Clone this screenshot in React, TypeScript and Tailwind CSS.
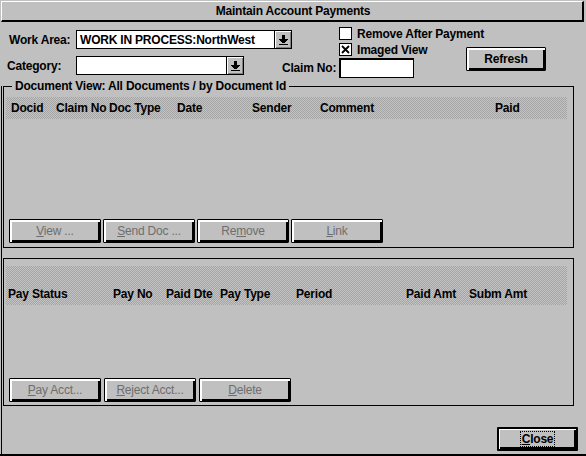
import React from "react";

const dither =
  "bg-[repeating-conic-gradient(#a4a4a4_0%_25%,#c4c4c4_0%_50%)] bg-[length:2px_2px]";

function DropArrow() {
  return (
    <svg width="9" height="10" viewBox="0 0 9 10" shapeRendering="crispEdges">
      <rect x="3" y="0" width="3" height="4" fill="#000" />
      <rect x="0" y="4" width="9" height="1" fill="#000" />
      <rect x="1" y="5" width="7" height="1" fill="#000" />
      <rect x="2" y="6" width="5" height="1" fill="#000" />
      <rect x="3" y="7" width="3" height="1" fill="#000" />
      <rect x="0" y="9" width="9" height="1" fill="#000" />
    </svg>
  );
}

function Dropdown({ width, value }: { width: string; value?: string }) {
  return (
    <div className={`${width} h-[19px] shrink-0 flex border border-black bg-white`}>
      <div className="flex-1 min-w-0 flex items-center pl-[3px] overflow-hidden whitespace-nowrap">{value}</div>
      <div className="w-[17px] shrink-0 h-full border-l border-black bg-[#c0c0c0] flex items-center justify-center shadow-[inset_1px_1px_0_#fff,inset_-1px_-1px_0_#808080]">
        <DropArrow />
      </div>
    </div>
  );
}

function Checkbox({ checked }: { checked?: boolean }) {
  return (
    <div className="w-[13px] h-[13px] shrink-0 border border-black bg-white flex items-center justify-center">
      {checked && (
        <svg width="9" height="9" viewBox="0 0 9 9">
          <path d="M1 1L8 8M8 1L1 8" stroke="#000" strokeWidth="1.8" />
        </svg>
      )}
    </div>
  );
}

function Btn({
  children,
  w,
  disabled,
}: {
  children: React.ReactNode;
  w: string;
  disabled?: boolean;
}) {
  return (
    <div
      className={`${w} h-[24px] shrink-0 border border-black rounded-[1px] flex items-center justify-center whitespace-nowrap shadow-[inset_1px_1px_0_#fff,inset_2px_2px_0_#fff,inset_-2px_-2px_0_#000] ${
        disabled ? "text-[#6e6e6e] font-normal" : "text-black"
      }`}
    >
      {children}
    </div>
  );
}

export default function App() {
  return (
    <div className="w-[586px] h-[456px] bg-[#c0c0c0] font-['Liberation_Sans',Arial,sans-serif] font-bold text-[12px] leading-[14px] tracking-[-0.2px] text-black flex flex-col border-b-2 border-black overflow-hidden">
      {/* title bar */}
      <div className="ml-[1px] mt-[1px] w-[583px] h-[21px] shrink-0 border-t border-l border-white border-r-[2px] border-b-[2px] border-r-black border-b-black flex items-center justify-center">
        <span className="ml-[2px]">Maintain Account Payments</span>
      </div>

      {/* top controls */}
      <div className="flex h-[64px] shrink-0">
        <div className="w-[282px] pl-[7px] pt-[8px] shrink-0">
          <div className="flex items-center h-[19px]">
            <div className="w-[69px] shrink-0 pl-[2px] whitespace-nowrap">Work Area:</div>
            <Dropdown width="w-[216px]" value="WORK IN PROCESS:NorthWest" />
          </div>
          <div className="flex items-center h-[19px] mt-[7px]">
            <div className="w-[69px] shrink-0 whitespace-nowrap">Category:</div>
            <Dropdown width="w-[168px]" />
          </div>
        </div>
        <div className="w-[184px] pt-[5px] shrink-0">
          <div className="flex items-center h-[13px] pl-[57px]">
            <Checkbox />
            <span className="ml-[5px] whitespace-nowrap">Remove After Payment</span>
          </div>
          <div className="flex items-center h-[13px] pl-[57px] mt-[3px]">
            <Checkbox checked />
            <span className="ml-[5px] whitespace-nowrap">Imaged View</span>
          </div>
          <div className="flex items-center mt-[2px]">
            <div className="w-[57px] shrink-0 whitespace-nowrap">Claim No:</div>
            <div className="w-[75px] h-[20px] shrink-0 border border-black bg-white shadow-[inset_1px_1px_0_#000]" />
          </div>
        </div>
        <div className="pt-[25px] shrink-0">
          <Btn w="w-[80px]">Refresh</Btn>
        </div>
      </div>

      {/* lower body */}
      <div className="flex-1 ml-[1px] border-l border-black flex flex-col">
        {/* group 1 */}
        <div className="relative ml-[1px] w-[571px] h-[162px] border border-black shrink-0">
          <span className="absolute top-[-8px] left-[8px] bg-[#c0c0c0] px-[3px] whitespace-nowrap">
            Document View: All Documents / by Document Id
          </span>
          <div className={`mt-[10px] ml-[2px] w-[561px] h-[22px] ${dither} flex items-center pl-[5px] whitespace-nowrap`}>
            <div className="w-[45px] shrink-0">Docid</div>
            <div className="w-[53px] shrink-0">Claim No</div>
            <div className="w-[68px] shrink-0">Doc Type</div>
            <div className="w-[75px] shrink-0">Date</div>
            <div className="w-[68px] shrink-0">Sender</div>
            <div className="w-[175px] shrink-0">Comment</div>
            <div>Paid</div>
          </div>
          <div className="flex gap-[2px] ml-[5px] mt-[100px]">
            <Btn w="w-[92px]" disabled>
              <span><u>V</u>iew ...</span>
            </Btn>
            <Btn w="w-[92px]" disabled>
              <span><u>S</u>end Doc ...</span>
            </Btn>
            <Btn w="w-[92px]" disabled>
              <span>Re<u>m</u>ove</span>
            </Btn>
            <Btn w="w-[92px]" disabled>
              <span><u>L</u>ink</span>
            </Btn>
          </div>
        </div>

        {/* group 2 */}
        <div className="ml-[1px] mt-[10px] w-[571px] h-[148px] border border-black shrink-0">
          <div className={`mt-[7px] ml-[2px] w-[561px] h-[39px] ${dither} flex items-end pb-[4px] pl-[2px] whitespace-nowrap`}>
            <div className="w-[105px] shrink-0">Pay Status</div>
            <div className="w-[53px] shrink-0">Pay No</div>
            <div className="w-[54px] shrink-0">Paid Dte</div>
            <div className="w-[76px] shrink-0">Pay Type</div>
            <div className="w-[110px] shrink-0">Period</div>
            <div className="w-[63px] shrink-0">Paid Amt</div>
            <div>Subm Amt</div>
          </div>
          <div className="flex gap-[3px] ml-[5px] mt-[73px]">
            <Btn w="w-[92px]" disabled>
              <span><u>P</u>ay Acct...</span>
            </Btn>
            <Btn w="w-[92px]" disabled>
              <span><u>R</u>eject Acct...</span>
            </Btn>
            <Btn w="w-[92px]" disabled>
              <span><u>D</u>elete</span>
            </Btn>
          </div>
        </div>

        {/* close */}
        <div className="flex justify-end mt-[21px] mr-[8px]">
          <div className="w-[81px] h-[24px] border-2 border-black rounded-[1px] flex items-center justify-center shadow-[inset_1px_1px_0_#fff,inset_-2px_-2px_0_#000]">
            <span className="outline outline-1 outline-dotted outline-black px-[1px] leading-[14px]">
              <u>C</u>lose
            </span>
          </div>
        </div>
      </div>
    </div>
  );
}
